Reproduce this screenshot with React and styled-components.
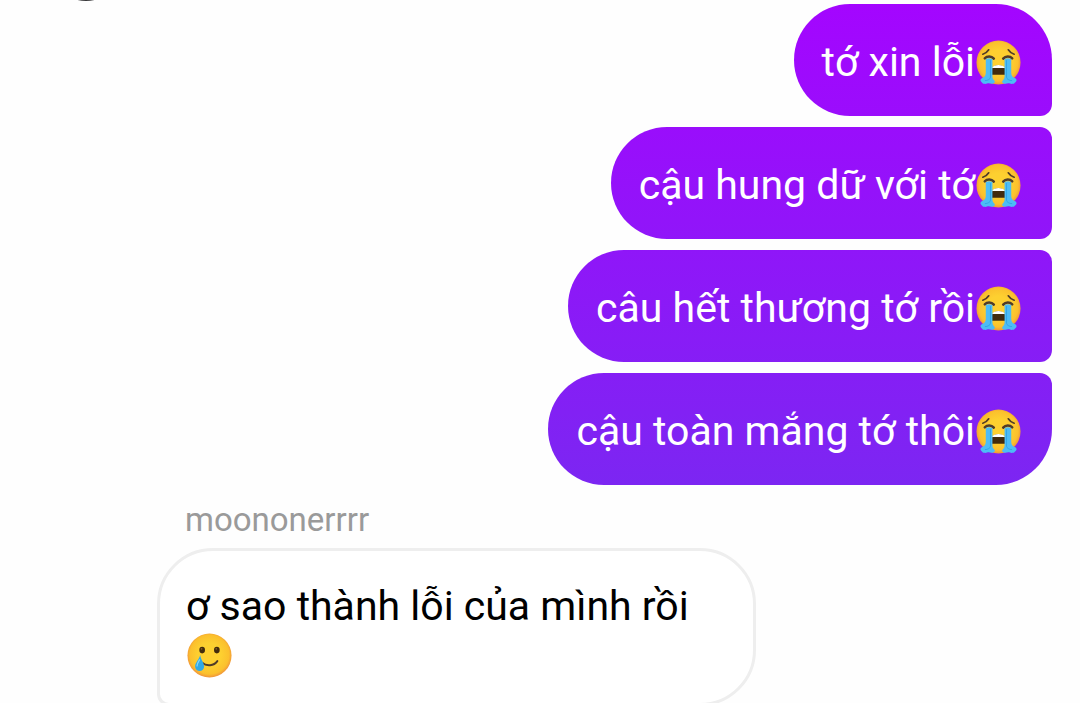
import React from "react";
import styled, { createGlobalStyle } from "styled-components";

const GlobalStyle = createGlobalStyle`
  * { box-sizing: border-box; }
  body {
    margin: 0;
    background: #fefefe;
    font-family: Roboto, "Noto Sans", sans-serif;
  }
`;

const Thread = styled.main`
  position: relative;
  display: flex;
  flex-direction: column;
  height: 100vh;
  overflow: hidden;
  padding: 4px 28px 0;
`;

const PreviousAvatar = styled.span`
  position: absolute;
  top: -73px;
  left: 49px;
  width: 74px;
  height: 74px;
  border-radius: 50%;
  background: #3a3a3c;
`;

const Sent = styled.section`
  display: flex;
  flex: none;
  flex-direction: column;
  align-items: flex-end;
  gap: 11px;
`;

const Bubble = styled.p`
  margin: 0;
  font-size: 41px;
  line-height: 49px;
`;

const SentBubble = styled(Bubble)`
  padding: 34px 30px 29px 28px;
  color: #fff;
  background: linear-gradient(#a405ff 0, #7c26f2 485px) fixed;
  border-radius: 56px ${(p) => (p.$first ? "56px" : "12px")}
    ${(p) => (p.$last ? "56px" : "12px")} 56px;
`;

const Received = styled.section`
  display: flex;
  flex: none;
  flex-direction: column;
  align-items: flex-start;
  margin-top: 15px;
  padding-left: 129px;
`;

const Sender = styled.span`
  margin-left: 28px;
  color: #9a9a9a;
  font-size: 33px;
  line-height: 40px;
`;

const ReceivedBubble = styled(Bubble)`
  max-width: 599px;
  margin-top: 8px;
  padding: 31px 26px 23px;
  color: #000;
  background: #fff;
  border: 3px solid #eee;
  border-radius: 56px 56px 56px 12px;
`;

const Emoji = styled.svg`
  width: 47px;
  height: 47px;
  vertical-align: -6px;
  margin: -4px 0;
`;

function FaceFill({ id }) {
  return (
    <>
      <radialGradient id={id} cx="50%" cy="48%" r="52%">
        <stop offset="0.5" stopColor="#fdd030" />
        <stop offset="0.85" stopColor="#fbc02d" />
        <stop offset="1" stopColor="#f0933b" />
      </radialGradient>
      <circle cx="24" cy="24" r="22.500" fill={`url(#${id})`} />
    </>
  );
}

function LoudlyCrying({ id }) {
  const tear =
    "M11 20.500c2-1.200 4.600-1.200 6.800 0V38c0 1.800.6 3 1.700 4 1.800 1.700.3 3.600-2.500 3.600-1.300 0-2.200-.4-3-.4-1.500 0-2.500 1-4.600.6-1.500-.3-2-1.200-2.900-2-1.700-1.400-1-3.400 1-4C9.500 39 11 37.500 11 34.500z";
  return (
    <Emoji viewBox="0 0 48 48" role="img" aria-label="😭">
      <FaceFill id={id} />
      <g fill="none" stroke="#513c28" strokeLinecap="round">
        <path d="M8 15.500c2.800-.8 4.600-2.200 6-4.500M40 15.500c-2.800-.8-4.600-2.200-6-4.500" strokeWidth="1.700" />
        <path d="M10 19.800c2.400-2.600 6.800-2.600 9.200.2M28.800 20c2.400-2.800 6.800-2.800 9.200-.2" strokeWidth="2.600" />
      </g>
      <path d="M16 36.500c-.3-6 3-9.900 8-9.900s8.300 3.900 8 9.900z" fill="#422b0d" />
      <path d="M17.300 29.500c1.400-2 3.700-2.900 6.700-2.900s5.300.9 6.700 2.900z" fill="#fff" />
      {[undefined, "matrix(-1 0 0 1 48 0)"].map((transform, i) => (
        <g key={i} transform={transform}>
          <path d={tear} fill="#4dbcf5" />
          <path d="M15.800 22v17c0 1.700-2.500 3.600-5.300 3.500" fill="none" stroke="#33a4e6" strokeWidth="1" strokeLinecap="round" />
        </g>
      ))}
    </Emoji>
  );
}

function SmilingTear({ id }) {
  return (
    <Emoji viewBox="0 0 48 48" role="img" aria-label="🥲">
      <FaceFill id={id} />
      <g fill="#422b0d">
        <ellipse cx="16.500" cy="18.500" rx="2.900" ry="3.400" />
        <ellipse cx="31.500" cy="18.500" rx="2.900" ry="3.400" />
      </g>
      <g fill="#896024">
        <circle cx="15.900" cy="17.200" r="0.900" />
        <circle cx="30.900" cy="17.200" r="0.900" />
      </g>
      <path d="M16.500 31.500c4.500 3.700 12 3.300 15.500-1.800" fill="none" stroke="#513c28" strokeWidth="2" strokeLinecap="round" />
      <path d="M14.500 23.500c.3 4.300 4 8 4 11.700a4.600 4.600 0 0 1-9.200 0c0-3.700 4-7 5.200-11.700z" fill="#31a9e6" />
      <path d="M13.800 28.500c-1.500 2.400-2.700 4-2.500 6.200" fill="none" stroke="#81d4fa" strokeWidth="1.300" strokeLinecap="round" />
    </Emoji>
  );
}

const messages = [
  "tớ xin lỗi",
  "cậu hung dữ với tớ",
  "câu hết thương tớ rồi",
  "cậu toàn mắng tớ thôi",
];

export default function App() {
  return (
    <>
      <GlobalStyle />
      <Thread>
        <PreviousAvatar />
        <Sent>
          {messages.map((text, i) => (
            <SentBubble key={text} $first={i === 0} $last={i === messages.length - 1}>
              {text}
              <LoudlyCrying id={`cry-${i}`} />
            </SentBubble>
          ))}
        </Sent>
        <Received>
          <Sender>moononerrrr</Sender>
          <ReceivedBubble>
            ơ sao thành lỗi của mình rồi <SmilingTear id="tear" />
          </ReceivedBubble>
        </Received>
      </Thread>
    </>
  );
}
